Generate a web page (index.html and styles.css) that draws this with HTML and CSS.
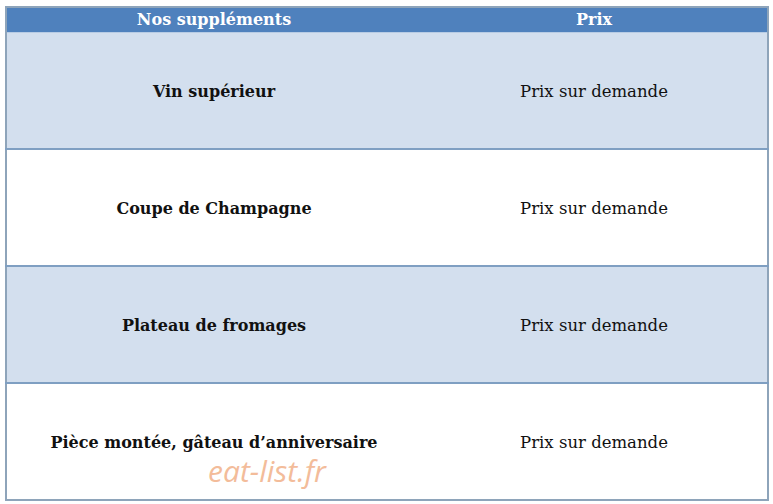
FILE: index.html
```html
<!DOCTYPE html>
<html lang="fr">
<head>
<meta charset="utf-8">
<link rel="stylesheet" href="styles.css">
</head>
<body>
<div class="page">
  <table class="menu">
    <thead>
      <tr><th class="c1">Nos suppléments</th><th class="c2">Prix</th></tr>
    </thead>
    <tbody>
      <tr class="alt"><td class="name">Vin supérieur</td><td class="price">Prix sur demande</td></tr>
      <tr><td class="name">Coupe de Champagne</td><td class="price">Prix sur demande</td></tr>
      <tr class="alt"><td class="name">Plateau de fromages</td><td class="price">Prix sur demande</td></tr>
      <tr><td class="name">Pièce montée, gâteau d’anniversaire</td><td class="price">Prix sur demande</td></tr>
    </tbody>
  </table>
  <div class="watermark">eat-list.fr</div>
</div>
</body>
</html>
```
FILE: styles.css
```css
html, body { margin: 0; padding: 0; background: #ffffff; }
.page {
  position: relative;
  width: 773px;
  height: 504px;
  padding: 6px 5px 0 5px;
  box-sizing: border-box;
}
.menu {
  width: 764px;
  border-collapse: collapse;
  border: 2px solid #8ea4ba;
  font-family: "DejaVu Serif", "Liberation Serif", serif;
  color: #111;
  table-layout: fixed;
}
.menu th {
  background: #4f81bd;
  color: #ffffff;
  font-size: 16px;
  font-weight: bold;
  height: 24px;
  padding: 0;
  line-height: 24px;
  border-bottom: 1px solid #b8cce4;
}
.menu .c1 { width: 414px; }
.menu td {
  height: 113px;
  padding: 2px 0 0 0;
  text-align: center;
  border-top: 2px solid #7f9fc2;
  font-size: 16px;
}
.menu tr.alt td { background: #d3dfee; }
.menu td.name { font-weight: bold; }
.menu td.price { font-weight: normal; font-size: 16.5px; }
.menu tbody tr:first-child td { border-top: none; }
.watermark {
  position: absolute;
  left: 208px;
  top: 457px;
  font-family: "Open Sans", sans-serif;
  font-style: italic;
  font-size: 30px;
  line-height: 28px;
  color: #f2b590;
  opacity: 0.9;
}
```
